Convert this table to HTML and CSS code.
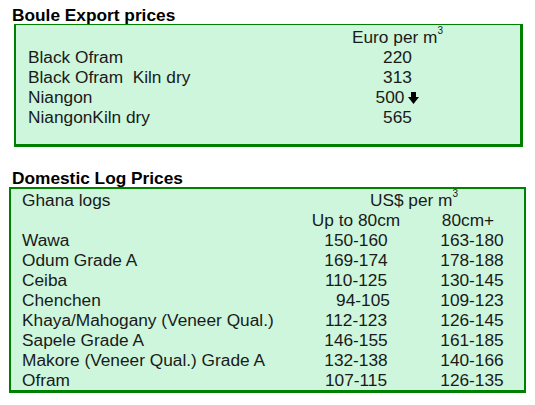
FILE: index.html
```html
<!DOCTYPE html>
<html>
<head>
<meta charset="utf-8">
<link rel="stylesheet" href="styles.css">
</head>
<body>
<h2 class="title t1">Boule Export prices</h2>
<div class="box box1">
  <div class="grid g1">
    <div></div><div class="c">Euro per m<sup>3</sup></div><div></div>
    <div>Black Ofram</div><div class="c">220</div><div></div>
    <div>Black Ofram&nbsp; Kiln dry</div><div class="c">313</div><div></div>
    <div>Niangon</div><div class="c">500<svg class="arrow" width="11" height="12" viewBox="0 0 11 12"><rect x="3" y="0" width="5" height="6" fill="#000"/><polygon points="0,5 11,5 5.5,12" fill="#000"/></svg></div><div></div>
    <div>NiangonKiln dry</div><div class="c">565</div><div></div>
  </div>
</div>
<h2 class="title t2">Domestic Log Prices</h2>
<div class="box box2">
  <div class="grid g2">
    <div>Ghana logs</div><div class="c span2">US$ per m<sup>3</sup></div>
    <div></div><div class="c">Up to 80cm</div><div class="c">80cm+</div>
    <div>Wawa</div><div class="c">150-160</div><div class="c v2">163-180</div>
    <div>Odum Grade A</div><div class="c">169-174</div><div class="c v2">178-188</div>
    <div>Ceiba</div><div class="c">110-125</div><div class="c v2">130-145</div>
    <div>Chenchen</div><div class="c sh">94-105</div><div class="c v2">109-123</div>
    <div>Khaya/Mahogany (Veneer Qual.)</div><div class="c">112-123</div><div class="c v2">126-145</div>
    <div>Sapele Grade A</div><div class="c">146-155</div><div class="c v2">161-185</div>
    <div>Makore (Veneer Qual.) Grade A</div><div class="c">132-138</div><div class="c v2">140-166</div>
    <div>Ofram</div><div class="c">107-115</div><div class="c v2">126-135</div>
  </div>
</div>
</body>
</html>
```
FILE: styles.css
```css
body {
  margin: 0;
  background: #fff;
  font-family: "Liberation Sans", Arial, sans-serif;
  color: #1a1a1a;
}
.title {
  margin: 0;
  font-size: 17.3px;
  font-weight: bold;
  line-height: 18px;
  color: #000;
  padding-left: 12px;
  white-space: nowrap;
}
.t1 { padding-top: 6px; }
.t2 { margin-top: 22px; }
.box {
  background: #cdf6dc;
  border-style: solid;
  border-color: #008000;
  box-sizing: border-box;
}
.box1 {
  margin-left: 14px;
  width: 509px;
  height: 123px;
  border-width: 1px 3px 3px 2px;
  padding: 2px 0 0 12px;
}
.box2 {
  margin-left: 9px;
  width: 517px;
  height: 206px;
  border-width: 2px 2px 3px 2px;
  padding: 1px 0 0 11px;
}
.grid {
  display: grid;
  font-size: 17.3px;
  line-height: 20px;
}
.g1 { grid-template-columns: 312px 115px 1fr; }
.g2 { grid-template-columns: 278px 112px 1fr; }
.c { text-align: center; white-space: nowrap; }
.span2 { grid-column: span 2; padding-left: 4px; }
.v2 { padding-left: 8px; }
.sh { padding-left: 14px; }
sup {
  font-size: 10px;
  line-height: 0;
  vertical-align: 9px;
}
.arrow {
  margin-left: 4px;
  vertical-align: -1px;
}
```
